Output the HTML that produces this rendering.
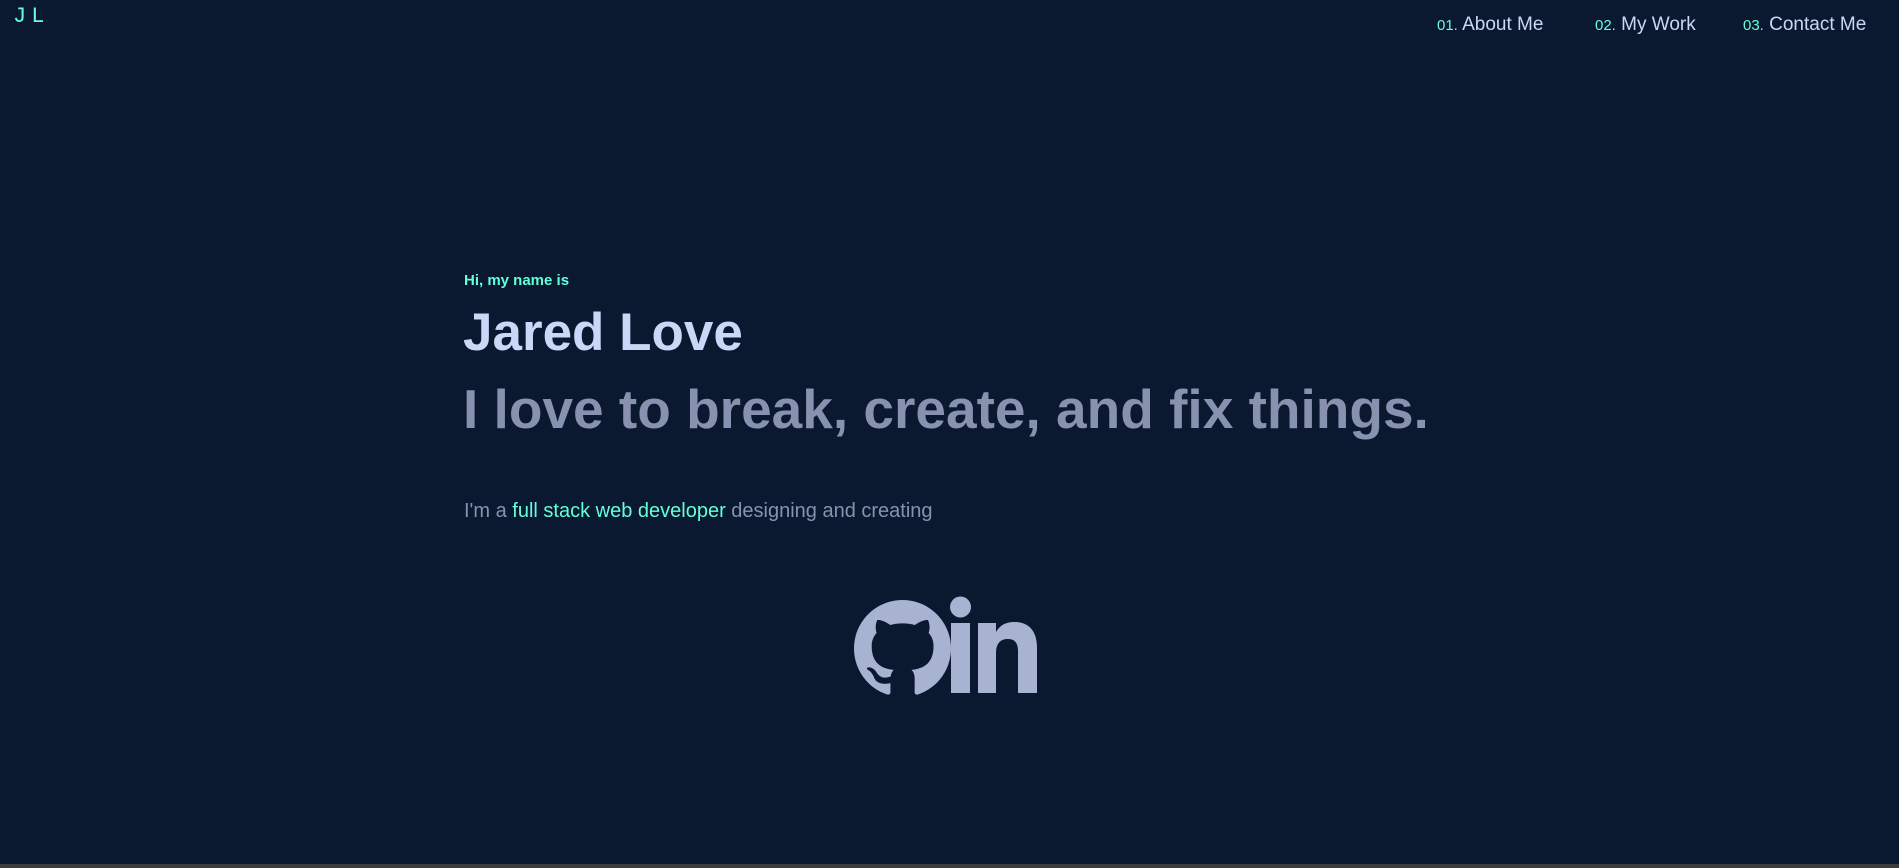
<!DOCTYPE html>
<html><head><meta charset="utf-8"><style>
html,body{margin:0;padding:0;}
body{width:1899px;height:868px;background:#0a192f;position:relative;overflow:hidden;font-family:"Liberation Sans",sans-serif;}
.logo{position:absolute;left:13px;top:4px;font-family:"Liberation Mono",monospace;color:#64ffda;font-size:22px;letter-spacing:5px;}
.nav{position:absolute;top:14px;font-size:19px;color:#ccd6f6;white-space:nowrap;}
.nav span{color:#64ffda;font-size:15px;}
.hi{position:absolute;left:464px;top:272px;color:#64ffda;font-weight:bold;font-size:15px;}
.name{position:absolute;left:463px;top:301px;color:#ccd6f6;font-weight:bold;font-size:53px;line-height:64px;}
.tag{position:absolute;left:463px;top:374px;color:#8892b0;font-weight:bold;font-size:55px;line-height:70px;}
.p{position:absolute;left:464px;top:500px;color:#8892b0;font-size:20px;}
.p b{font-weight:normal;color:#64ffda;}
.bot{position:absolute;left:0;bottom:0;width:100%;height:4px;background:#3c3c3c;}
</style></head><body>
<div class="logo">JL</div>
<div class="nav" style="left:1437px"><span>01.</span> About Me</div>
<div class="nav" style="left:1595px"><span>02.</span> My Work</div>
<div class="nav" style="left:1743px"><span>03.</span> Contact Me</div>
<div class="hi">Hi, my name is</div>
<div class="name">Jared Love</div>
<div class="tag">I love to break, create, and fix things.</div>
<div class="p">I'm a <b>full stack web developer</b> designing and creating</div>
<svg style="position:absolute;left:854px;top:600px" width="97" height="97" viewBox="0 0 16 16"><path fill="#a8b2d1" d="M8 0C3.580 0 0 3.58 0 8c0 3.54 2.29 6.53 5.47 7.59.4.07.55-.17.55-.38 0-.19-.01-.82-.01-1.490-2.010.37-2.53-.49-2.69-.94-.09-.23-.48-.94-.82-1.130-.28-.15-.68-.52-.01-.53.63-.01 1.080.58 1.23.82.72 1.21 1.870.87 2.330.66.07-.52.28-.87.51-1.070-1.78-.2-3.64-.89-3.64-3.950 0-.87.31-1.59.82-2.150-.08-.2-.36-1.020.08-2.120 0 0 .67-.21 2.2.82.64-.18 1.32-.27 2-.27.68 0 1.360.09 2 .27 1.53-1.040 2.2-.82 2.2-.82.44 1.1.16 1.92.08 2.12.51.56.82 1.27.82 2.15 0 3.07-1.870 3.75-3.650 3.95.29.25.54.73.54 1.48 0 1.07-.01 1.93-.01 2.2 0 .21.15.46.55.38A8.013 8.013 0 0016 8c0-4.42-3.58-8-8-8z"/></svg>
<svg style="position:absolute;left:948px;top:594px" width="95" height="102" viewBox="948 594 95 102"><g fill="#a8b2d1"><circle cx="960.5" cy="607" r="10.5"/><rect x="951" y="623" width="19" height="70"/><path d="M978 623h18v9c4-7 10-10 18-10c15 0 23 9 23 26v45h-19v-41c0-9-3-13-10-13c-8 0-12 5-12 14v40h-18z"/></g></svg>
<div class="bot"></div>
</body></html>
